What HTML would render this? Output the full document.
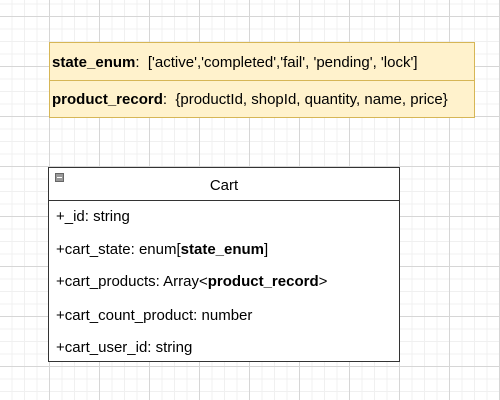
<!DOCTYPE html>
<html><head><style>
body{margin:0;width:500px;height:400px;overflow:hidden;font-family:"Liberation Sans",Arial,sans-serif;font-size:15px;color:#000;
background-color:#fff;
background-image:
linear-gradient(to right,#d6d6d6 1px,transparent 1px),
linear-gradient(to bottom,#d6d6d6 1px,transparent 1px),
linear-gradient(to right,#f0f0f0 1px,transparent 1px),
linear-gradient(to bottom,#f0f0f0 1px,transparent 1px);
background-size:50px 50px,50px 50px,12.5px 12.5px,12.5px 12.5px;
background-position:49px 16px,49px 16px,49px 16px,49px 16px;
position:relative}
.y{position:absolute;left:49px;width:426px;background:#fff2cc;border:1px solid #d6b656;box-sizing:border-box;padding-left:2px}
.c{position:absolute;left:48px;top:167px;width:352px;height:195px;border:1px solid #333;box-sizing:border-box;background:#fff}
.h{height:32px;border-bottom:1px solid #333;text-align:center;line-height:35px;position:relative}
.m{position:absolute;left:6px;top:5px;width:9px;height:9px;background:#999;border:1px solid #666;box-sizing:border-box}
.m:after{content:"";position:absolute;left:1px;right:1px;top:3px;height:1px;background:#fff}
.r{position:absolute;left:7px}
</style></head><body>
<div class="y" style="top:42px;height:39px;line-height:39px"><b>state_enum</b>:&nbsp; ['active','completed','fail', 'pending', 'lock']</div>
<div class="y" style="top:80px;height:38px;line-height:38px"><b>product_record</b>:&nbsp; {productId, shopId, quantity, name, price}</div>
<div class="c">
<div class="h"><div class="m"></div>Cart</div>
<div class="r" style="top:40px">+_id: string</div>
<div class="r" style="top:73px">+cart_state: enum[<b>state_enum</b>]</div>
<div class="r" style="top:105px">+cart_products: Array&lt;<b>product_record</b>&gt;</div>
<div class="r" style="top:139px">+cart_count_product: number</div>
<div class="r" style="top:171px">+cart_user_id: string</div>
</div>
</body></html>
